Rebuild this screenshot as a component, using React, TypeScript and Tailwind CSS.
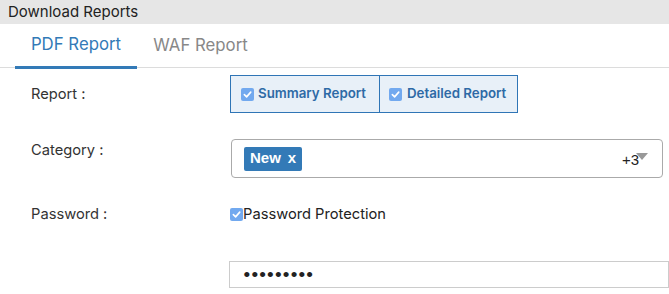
import React from "react";

function Check({ className = "" }: { className?: string }) {
  return (
    <span className={`inline-flex items-center justify-center w-[13px] h-[13px] rounded-[2px] bg-[#72a9ef] ${className}`}>
      <svg width="9" height="9" viewBox="0 0 10 10">
        <path d="M1.5 5.2 L4 7.6 L8.6 2.4" fill="none" stroke="#fff" strokeWidth="1.8" strokeLinecap="round" strokeLinejoin="round" />
      </svg>
    </span>
  );
}

export default function App() {
  const inter = { fontFamily: "Inter, 'Noto Sans', sans-serif" };
  return (
    <div className="w-[669px] h-[294px] overflow-hidden bg-white text-[#333]" style={inter}>
      <div className="h-[24px] bg-[#e6e6e6] pl-[8px] text-[15px] leading-[24px] text-[#222]">Download Reports</div>
      <div className="flex h-[44px] border-b border-[#dcdcdc] pl-[15px]">
        <div className="w-[122px] flex items-center justify-center text-[16.8px] text-[#337ab7] border-b-[3px] border-[#337ab7] -mb-[2px]">PDF Report</div>
        <div className="w-[127px] flex items-center justify-center text-[16.8px] text-[#888]">WAF Report</div>
      </div>

      <div className="pl-[31px]">
        <div className="flex items-center mt-[7px] h-[38px]">
          <div className="w-[199px] text-[14.7px]">Report :</div>
          <div className="flex h-[38px] border border-[#2f75b6] bg-[#e8f0f8] text-[13.3px] font-semibold text-[#2e6aa6]">
            <div className="flex items-center pl-[10px] w-[148px]">
              <Check />
              <span className="ml-[4px]">Summary Report</span>
            </div>
            <div className="flex items-center pl-[9px] w-[138px] border-l border-[#2f75b6]">
              <Check />
              <span className="ml-[5px]">Detailed Report</span>
            </div>
          </div>
        </div>

        <div className="flex mt-[26px]">
          <div className="w-[200px] text-[14.7px] leading-[20px] pt-[1px]">Category :</div>
          <div className="relative flex items-center w-[432px] h-[39px] border border-[#aaa] rounded-[4px] pl-[12px]" style={{ fontFamily: "'Liberation Sans', Arial, sans-serif" }}>
            <div className="flex items-center h-[24px] bg-[#337ab7] rounded-[2px] px-[6px] text-white font-bold text-[15px]">
              <span>New</span>
              <span className="ml-[7px]">x</span>
            </div>
            <span className="absolute left-[390px] top-[9px] text-[15px] text-[#222]">+3</span>
            <span className="absolute left-[404px] top-[13px] w-0 h-0 border-l-[6px] border-r-[6px] border-t-[7px] border-l-transparent border-r-transparent border-t-[#999]" />
          </div>
        </div>

        <div className="flex items-center mt-[26px] h-[20px]">
          <div className="w-[199px] text-[14.7px]">Password :</div>
          <Check />
          <span className="text-[14.7px] text-[#222]">Password Protection</span>
        </div>

        <div className="flex mt-[37px]">
          <div className="w-[202px]" />
          <div className="w-[450px] h-[27px] border border-[#ccc] pl-[14px] flex items-center text-[19px] leading-[20px] tracking-[1.2px] text-[#222]" style={{ fontFamily: "'Liberation Sans', Arial, sans-serif" }}>
            •••••••••
          </div>
        </div>
      </div>
    </div>
  );
}
